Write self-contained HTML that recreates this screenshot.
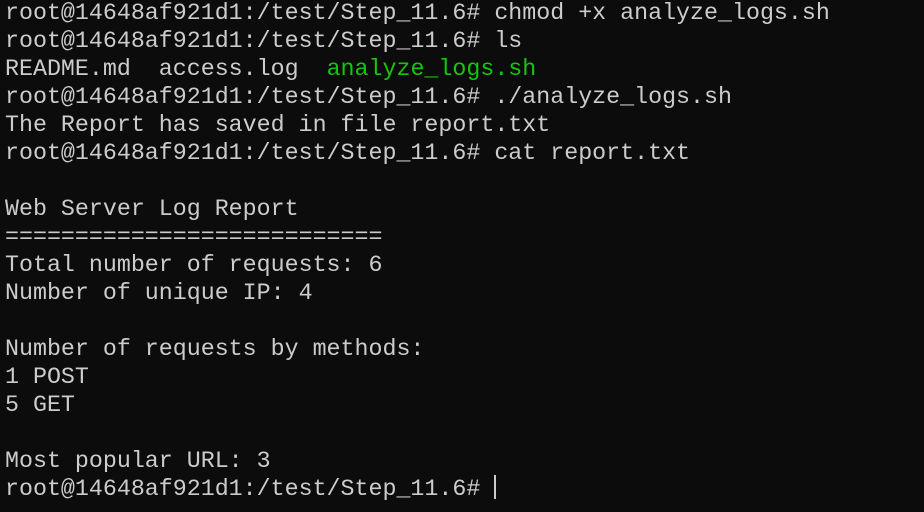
<!DOCTYPE html>
<html><head><style>
html,body{margin:0;padding:0;background:#0c0c0c;width:924px;height:512px;overflow:hidden}
pre{margin:0;position:absolute;left:5px;top:-1px;font-family:"Liberation Mono","DejaVu Sans Mono",monospace;font-size:23.3px;line-height:28px;color:#cccccc;letter-spacing:0}
.g{color:#16c60c}
.cur{position:absolute;left:494px;top:475px;width:2px;height:24px;background:#cccccc}
</style></head><body>
<pre>root@14648af921d1:/test/Step_11.6# chmod +x analyze_logs.sh
root@14648af921d1:/test/Step_11.6# ls
README.md  access.log  <span class="g">analyze_logs.sh</span>
root@14648af921d1:/test/Step_11.6# ./analyze_logs.sh
The Report has saved in file report.txt
root@14648af921d1:/test/Step_11.6# cat report.txt

Web Server Log Report
===========================
Total number of requests: 6
Number of unique IP: 4

Number of requests by methods:
1 POST
5 GET

Most popular URL: 3
root@14648af921d1:/test/Step_11.6# </pre>
<div class="cur"></div>
</body></html>
